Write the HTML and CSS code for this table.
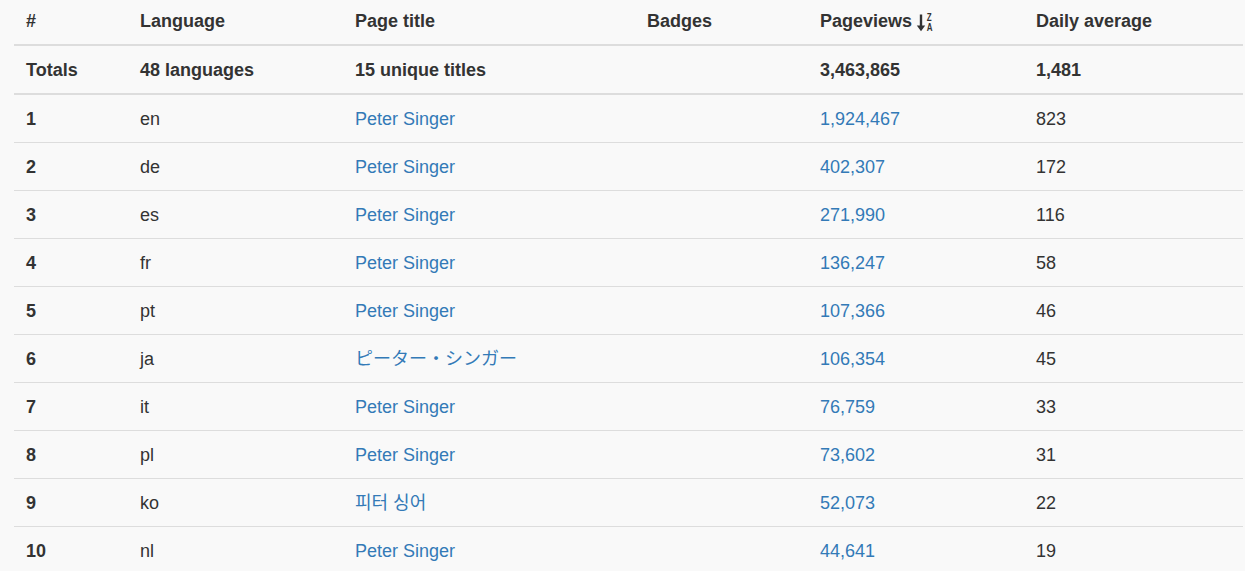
FILE: index.html
```html
<!DOCTYPE html>
<html>
<head>
<meta charset="utf-8">
<link rel="stylesheet" href="styles.css">
</head>
<body>
<div class="wrap">
<table class="stats">
  <colgroup>
    <col class="c1"><col class="c2"><col class="c3"><col class="c4"><col class="c5"><col class="c6">
  </colgroup>
  <thead>
    <tr>
      <th>#</th>
      <th>Language</th>
      <th>Page title</th>
      <th>Badges</th>
      <th><span class="sorted">Pageviews <svg class="sort-icon" width="18" height="20" viewBox="0 0 18 20"><path d="M5 1.5v14.5" stroke="#333" stroke-width="2.4" fill="none"/><path d="M0.8 12.5L5 18.3 9.2 12.5z" fill="#333"/><text x="13.5" y="8.2" class="ico-t" transform="scale(0.8 1)">Z</text><text x="13.5" y="18.2" class="ico-t" transform="scale(0.8 1)">A</text></svg></span></th>
      <th>Daily average</th>
    </tr>
  </thead>
  <tbody class="totals">
    <tr>
      <td>Totals</td>
      <td>48 languages</td>
      <td>15 unique titles</td>
      <td></td>
      <td>3,463,865</td>
      <td>1,481</td>
    </tr>
  </tbody>
  <tbody class="rows">
    <tr><td class="rank">1</td><td>en</td><td><a href="#">Peter Singer</a></td><td></td><td><a href="#">1,924,467</a></td><td>823</td></tr>
    <tr><td class="rank">2</td><td>de</td><td><a href="#">Peter Singer</a></td><td></td><td><a href="#">402,307</a></td><td>172</td></tr>
    <tr><td class="rank">3</td><td>es</td><td><a href="#">Peter Singer</a></td><td></td><td><a href="#">271,990</a></td><td>116</td></tr>
    <tr><td class="rank">4</td><td>fr</td><td><a href="#">Peter Singer</a></td><td></td><td><a href="#">136,247</a></td><td>58</td></tr>
    <tr><td class="rank">5</td><td>pt</td><td><a href="#">Peter Singer</a></td><td></td><td><a href="#">107,366</a></td><td>46</td></tr>
    <tr><td class="rank">6</td><td>ja</td><td><a href="#" class="cjk">ピーター・シンガー</a></td><td></td><td><a href="#">106,354</a></td><td>45</td></tr>
    <tr><td class="rank">7</td><td>it</td><td><a href="#">Peter Singer</a></td><td></td><td><a href="#">76,759</a></td><td>33</td></tr>
    <tr><td class="rank">8</td><td>pl</td><td><a href="#">Peter Singer</a></td><td></td><td><a href="#">73,602</a></td><td>31</td></tr>
    <tr><td class="rank">9</td><td>ko</td><td><a href="#" class="cjk-kr">피터 싱어</a></td><td></td><td><a href="#">52,073</a></td><td>22</td></tr>
    <tr><td class="rank">10</td><td>nl</td><td><a href="#">Peter Singer</a></td><td></td><td><a href="#">44,641</a></td><td>19</td></tr>
  </tbody>
</table>
</div>
</body>
</html>
```

FILE: styles.css
```css
html, body {
  margin: 0;
  padding: 0;
  background: #f9f9f9;
}
body {
  font-family: "Liberation Sans", Arial, sans-serif;
  font-size: 18px;
  color: #333;
  overflow: hidden;
}
.wrap {
  margin-left: 14px;
  width: 1229px;
}
.stats {
  width: 1229px;
  border-collapse: collapse;
  border-spacing: 0;
  table-layout: fixed;
}
.c1 { width: 114px; }
.c2 { width: 215px; }
.c3 { width: 292px; }
.c4 { width: 173px; }
.c5 { width: 216px; }
.c6 { width: 219px; }

.stats th,
.stats td {
  text-align: left;
  line-height: 23px;
  padding: 13px 12px 11px 12px;
  vertical-align: top;
  white-space: nowrap;
}
.stats thead th {
  font-weight: bold;
  padding-top: 10px;
  padding-bottom: 11px;
  border-bottom: 2px solid #ddd;
}
.totals td {
  font-weight: bold;
}
.rows td {
  border-top: 1px solid #ddd;
}
.rows tr:first-child td {
  border-top: 2px solid #ddd;
}
.rank {
  font-weight: bold;
}
.stats a {
  color: #337ab7;
  text-decoration: none;
}
.cjk {
  font-family: "Liberation Sans", "Noto Sans CJK JP", sans-serif;
}
.cjk-kr {
  font-family: "Liberation Sans", "Noto Sans CJK KR", sans-serif;
}
.sorted {
  display: inline-flex;
  align-items: center;
}
.sort-icon {
  margin-left: 4px;
  margin-top: 2px;
}
.ico-t {
  font-family: "Liberation Sans", sans-serif;
  font-size: 10px;
  font-weight: bold;
  fill: #333;
}
```
